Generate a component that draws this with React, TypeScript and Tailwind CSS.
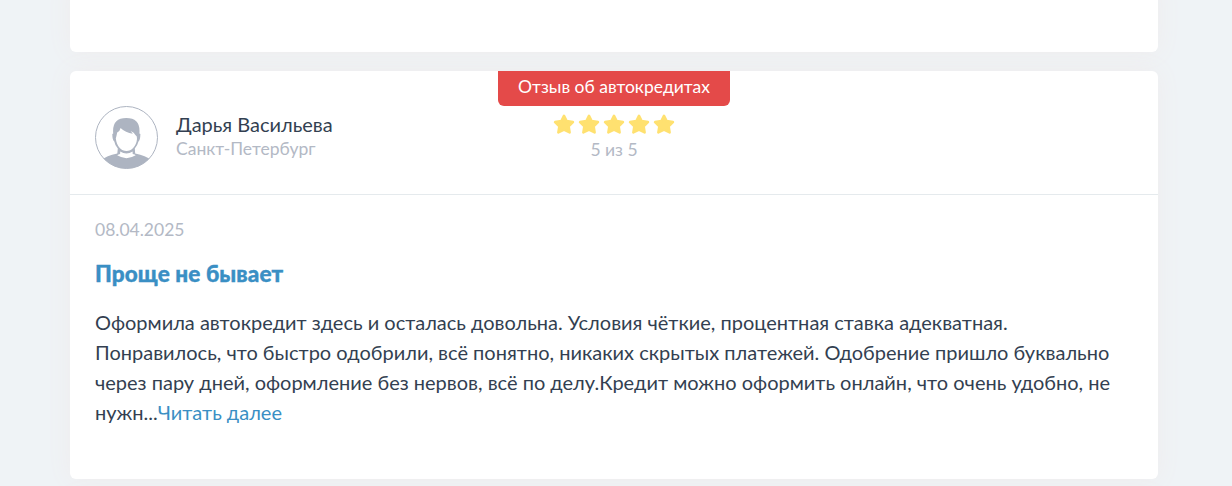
import type { ReactNode } from "react";

type Review = {
  author: string;
  city: string;
  category: string;
  rating: number;
  date: string;
  title: string;
  text: string;
};

const review: Review = {
  author: "Дарья Васильева",
  city: "Санкт-Петербург",
  category: "Отзыв об автокредитах",
  rating: 5,
  date: "08.04.2025",
  title: "Проще не бывает",
  text: "Оформила автокредит здесь и осталась довольна. Условия чёткие, процентная ставка адекватная. Понравилось, что быстро одобрили, всё понятно, никаких скрытых платежей. Одобрение пришло буквально через пару дней, оформление без нервов, всё по делу.Кредит можно оформить онлайн, что очень удобно, не нужн...",
};

function Avatar() {
  return (
    <svg viewBox="0 0 63 63" className="size-[63px] shrink-0" aria-hidden="true">
      <defs>
        <clipPath id="avatar-clip">
          <circle cx="31.5" cy="31.5" r="31" />
        </clipPath>
      </defs>
      <g clipPath="url(#avatar-clip)">
        <path
          fill="#adb4c1"
          d="M7 54 Q11 49.5 22.3 47.5 L22.8 42.5 Q19.8 39 19.3 35.5 Q17.3 34 17.3 28 L18.2 27.5 Q16.8 12 31.3 12 Q45.8 12 44.4 27.5 L45.4 28 Q45.3 34 43.5 35.5 Q42.5 39.5 39.8 42.5 L40.2 47.5 Q51 49.5 56 54 L56 64 H7Z"
        />
        <path
          fill="#fff"
          d="M20.8 32.5 Q21.6 29.5 22.2 26.5 Q25 25 25.6 22 Q30.5 26.8 37.8 27.8 L35.7 25 Q39.3 26.5 40.4 29 Q42.4 30 42 33 C41.3 40.5 36.5 45 31.5 45 C26.5 45 21.6 40.5 20.8 32.5Z"
        />
        <path fill="#fff" d="M25.2 45.6 Q31.5 49.4 37.6 45.6 L37.7 48 Q40 48.6 40.7 49.3 Q31.5 55 22.2 49.3 Q23.5 48.5 25.1 48Z" />
      </g>
      <circle cx="31.5" cy="31.5" r="31" fill="none" stroke="#adb4c1" />
    </svg>
  );
}

function Star() {
  return (
    <svg viewBox="0 0 22 22" className="size-[22px]" aria-hidden="true">
      <path
        d="M11 2.9 L13.6 8 L19.9 9.1 L15.6 13.2 L16.6 19.4 L11 16.7 L5.4 19.4 L6.4 13.2 L2.1 9.1 L8.4 8Z"
        fill="#ffe170"
        stroke="#ffe170"
        strokeWidth="2.6"
        strokeLinejoin="round"
      />
    </svg>
  );
}

function Card({ children, className = "" }: { children?: ReactNode; className?: string }) {
  return (
    <article className={`w-[1088px] shrink-0 rounded-md bg-white shadow-[0_0_25px_rgba(239,236,237,1)] ${className}`}>
      {children}
    </article>
  );
}

function ReviewCard({ item }: { item: Review }) {
  return (
    <Card className="h-[408px]">
      <header className="grid h-[124px] grid-cols-[428px_232px_1fr] border-b border-[#e5eaed]">
        <div className="flex items-start gap-[18px] pt-[35px] pl-[25px]">
          <Avatar />
          <div className="pt-1.5">
            <p className="text-xl leading-6 text-[#333f51]">{item.author}</p>
            <p className="mt-px text-[17.5px] leading-6 text-[#b3b9c5]">{item.city}</p>
          </div>
        </div>
        <div className="flex flex-col items-center">
          <div className="h-[35px] w-full rounded-b-md bg-[#e44a49] text-center text-[17.5px] leading-[31px] text-white">
            {item.category}
          </div>
          <div className="mt-[7px] flex gap-[3px]">
            {Array.from({ length: item.rating }, (_, i) => (
              <Star key={i} />
            ))}
          </div>
          <p className="mt-[3px] text-[17.5px] leading-6 text-[#b3b9c5]">{item.rating} из 5</p>
        </div>
      </header>
      <div className="px-[25px] pt-[23px]">
        <time className="block text-[17.5px] leading-6 text-[#b3b9c5]">{item.date}</time>
        <h2 className="mt-[17px] text-[22.5px] leading-[30px] font-black tracking-[0.1px] text-[#3a8fc4] [-webkit-text-stroke:0.4px_#3a8fc4]">
          {item.title}
        </h2>
        <p className="mt-[18px] text-xl leading-[30px] text-[#333f51]">
          {item.text}
          <a href="#" className="inline-block text-[#3a8fc4]">Читать далее</a>
        </p>
      </div>
    </Card>
  );
}

export default function App() {
  return (
    <main className="flex h-[486px] flex-col gap-[19px] overflow-hidden bg-[#eff3f6] pl-[70px] font-['Lato',sans-serif]">
      <Card className="-mt-5 h-[72px]" />
      <ReviewCard item={review} />
      <Card className="h-20" />
    </main>
  );
}
